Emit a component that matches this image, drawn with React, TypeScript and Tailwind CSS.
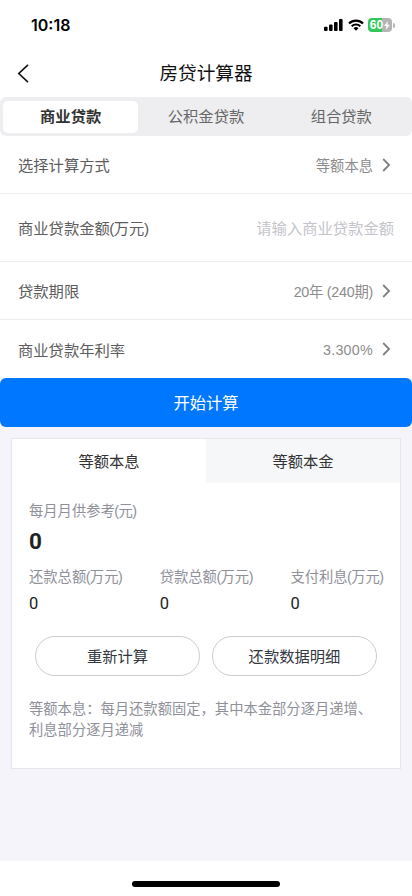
interface FormRow {
  label: string
  value: string
  height: string
  tracking?: string
}

const loanTabs = ['商业贷款', '公积金贷款', '组合贷款']

const rows: FormRow[] = [
  { label: '贷款期限', value: '20年 (240期)', height: 'h-[58px]', tracking: 'tracking-[-0.25px]' },
  { label: '商业贷款年利率', value: '3.300%', height: 'h-[58px]', tracking: 'tracking-[0.25px]' },
]

const totals = [
  { label: '还款总额', unit: '万元', value: '0' },
  { label: '贷款总额', unit: '万元', value: '0' },
  { label: '支付利息', unit: '万元', value: '0' },
]

function StatusBar() {
  return (
    <div className="flex h-[50px] items-center justify-between pl-[31px] pr-[17.5px] text-black">
      <span className="font-['Inter'] text-[16px] font-semibold leading-5">10:18</span>
      <div className="flex items-center">
        <svg width="19" height="12" viewBox="0 0 19 12" fill="currentColor">
          <rect x="0" y="7.8" width="3.6" height="4.2" rx="1" />
          <rect x="5" y="5.6" width="3.6" height="6.4" rx="1" />
          <rect x="10" y="3" width="3.6" height="9" rx="1" />
          <rect x="15" y="0" width="3.6" height="12" rx="1" />
        </svg>
        <svg className="ml-[5px]" width="16" height="12" viewBox="0 0 16 12" fill="none" stroke="currentColor">
          <path d="M1 4.5a10 10 0 0 1 14 0" strokeWidth="2.2" />
          <path d="M3.7 7.3a6.1 6.1 0 0 1 8.6 0" strokeWidth="2.1" />
          <path d="M8 11.8 5.5 9.2a3.6 3.6 0 0 1 5 0Z" fill="currentColor" stroke="none" />
        </svg>
        <div className="ml-1 flex h-[14px] w-6 items-center justify-center rounded-[4px] bg-[linear-gradient(90deg,#35c759_60%,#b4b4b4_60%)]">
          <span className="text-[12px] font-bold leading-[14px] text-white">60</span>
          <svg className="ml-px" width="6" height="9" viewBox="0 0 6 9" fill="white">
            <path d="M3.8 0 .2 5h2.3L2 9l3.8-5.2H3.4z" />
          </svg>
        </div>
        <span className="ml-px h-[5px] w-[1.5px] rounded-r bg-[#b4b4b4]" />
      </div>
    </div>
  )
}

function Chevron() {
  return (
    <svg className="ml-[9px]" width="9" height="14" viewBox="0 0 9 14" fill="none" stroke="#808084" strokeWidth="1.8">
      <path d="m1.2 1 5.9 6-5.9 6" />
    </svg>
  )
}

// Unit in slightly tightened brackets
function Unit({ children }: { children: string }) {
  return (
    <>
      <span className="-ml-[0.5px] tracking-[-0.6px]">(</span>
      {children}
      <span className="-ml-[0.5px]">)</span>
    </>
  )
}

function SelectRow({ label, value, height, tracking = '' }: FormRow) {
  return (
    <div className={`flex items-center justify-between pl-[18px] pr-[21px] ${height}`}>
      <span className="pt-1 text-[15.3px] text-[#5c5c5c]">{label}</span>
      <div className="flex items-center">
        <span className={`pt-1 text-[14.3px] text-[#8c8c8c] ${tracking}`}>{value}</span>
        <Chevron />
      </div>
    </div>
  )
}

function ResultCard() {
  return (
    <section className="mx-[11px] mt-[11px] h-[331px] border border-[#e5e5ea] bg-white">
      <div className="grid h-[44px] grid-cols-2 text-center text-[15.3px] leading-[42px] text-[#333]">
        <div className="pt-[2px]">等额本息</div>
        <div className="bg-[#f6f7f9] pt-[2px]">等额本金</div>
      </div>

      <div className="pl-[17px] pt-[18px]">
        <div className="text-[14.3px] leading-5 text-[#8f919a]">
          每月月供参考<Unit>元</Unit>
        </div>
        <div className="mt-[7px] font-['Roboto'] text-[22.5px] font-bold leading-[26px] text-[#222]">0</div>
        <div className="mt-[13px] flex">
          {totals.map((item) => (
            <div key={item.label} className="w-[130.7px] shrink-0">
              <div className="whitespace-nowrap text-[14.3px] leading-5 text-[#8f919a]">
                {item.label}
                <Unit>{item.unit}</Unit>
              </div>
              <div className="mt-[7px] font-['Roboto'] text-[16.5px] leading-5 text-[#222]">{item.value}</div>
            </div>
          ))}
        </div>
      </div>

      <div className="mt-[22px] flex gap-3 pl-[23px] text-[15.3px] text-[#333740]">
        <button className="h-[40px] w-[165px] rounded-full border border-[#ccccd0] pt-[2px]">重新计算</button>
        <button className="h-[40px] w-[165px] rounded-full border border-[#ccccd0] pt-[2px]">还款数据明细</button>
      </div>

      <p className="mt-[23px] px-[17px] text-[14.3px] leading-[21px] text-[#8f919a]">
        等额本息：每月还款额固定，其中本金部分逐月递增、
        <br />
        利息部分逐月递减
      </p>
    </section>
  )
}

export default function App() {
  return (
    <div className="flex h-[896px] w-[412px] flex-col overflow-hidden bg-[#f4f4fa] font-['Liberation_Sans','Noto_Sans_CJK_SC',sans-serif]">
      <header className="bg-white">
        <StatusBar />
        <div className="grid h-[47px] grid-cols-[48px_1fr_48px] items-center">
          <svg className="ml-[16.5px]" width="12" height="19" viewBox="0 0 12 19" fill="none" stroke="#111" strokeWidth="1.6">
            <path d="M11 .8 1.8 9.5l9.2 8.7" />
          </svg>
          <h1 className="text-center text-[18.6px] text-[#111]">房贷计算器</h1>
        </div>
      </header>

      <div className="bg-white">
        <nav className="grid h-[39px] grid-cols-3 rounded-[6px] bg-[#eeeef0] px-[3px] pb-[3px] pt-[4px] text-center text-[15.3px] leading-[32px] text-[#666]">
          {loanTabs.map((tab, index) => (
            <div key={tab} className={index === 0 ? 'rounded-[5px] bg-white font-bold text-[#333]' : ''}>
              {tab}
            </div>
          ))}
        </nav>
      </div>

      <main className="divide-y divide-[#ededf0] bg-white">
        <SelectRow label="选择计算方式" value="等额本息" height="h-[58px]" />
        <div className="flex h-[68px] items-center justify-between pl-[18px] pr-[18px] pt-1 text-[15.3px]">
          <span className="text-[#5c5c5c]">
            商业贷款金额<Unit>万元</Unit>
          </span>
          <span className="text-[#c4c4ca]">请输入商业贷款金额</span>
        </div>
        {rows.map((row) => (
          <SelectRow key={row.label} {...row} />
        ))}
      </main>

      <button className="h-[49px] shrink-0 rounded-[6px] bg-[#0077ff] pt-px text-[16.3px] text-white">开始计算</button>

      <ResultCard />

      <footer className="mt-auto flex h-[35px] items-end justify-center bg-white pb-[9px]">
        <div className="h-[6px] w-[148px] rounded-full bg-black" />
      </footer>
    </div>
  )
}
